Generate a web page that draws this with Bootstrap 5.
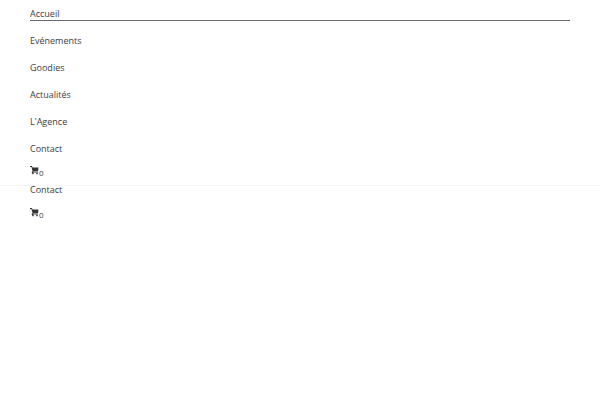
<!DOCTYPE html>
<html lang="fr">
<head>
<meta charset="utf-8">
<meta name="viewport" content="width=device-width, initial-scale=1">
<title>Accueil</title>
<link href="https://cdn.jsdelivr.net/npm/bootstrap@5.3.0/dist/css/bootstrap.min.css" rel="stylesheet">
<style>
body { font-family: "Open Sans", sans-serif; background: #fff; }
.site-menu { padding: 0 30px; }
.site-menu .nav-link { color: #3c3c3c; font-size: 9px; line-height: 13px; padding: 7px 0 6px; border-bottom: 1px solid transparent; }
.main-menu { border-bottom: 1px solid #f4f4f4; }
.main-menu .nav-link.active { padding-bottom: 0; margin-bottom: 6px; border-color: #6a6a72; }
.sub-menu { margin-top: -3px; }
.sub-menu .nav-link { padding-top: 0; }
.site-menu .cart-link { padding: 4px 0 7px; }
.sub-menu .cart-link { padding-top: 5px; }
.cart-link svg { width: 9px; height: 9px; margin-bottom: 2px; fill: #333; }
.cart-count { font-size: 8px; line-height: 8px; }
</style>
</head>
<body>
<header class="main-menu">
<nav class="site-menu" aria-label="Menu principal">
<ul class="nav flex-column">
<li class="nav-item"><a class="nav-link active" href="#" aria-current="page">Accueil</a></li>
<li class="nav-item"><a class="nav-link" href="#">Evénements</a></li>
<li class="nav-item"><a class="nav-link" href="#">Goodies</a></li>
<li class="nav-item"><a class="nav-link" href="#">Actualités</a></li>
<li class="nav-item"><a class="nav-link" href="#">L'Agence</a></li>
<li class="nav-item"><a class="nav-link" href="#">Contact</a></li>
<li class="nav-item"><a class="nav-link cart-link d-flex align-items-start" href="#" aria-label="Panier, 0 article"><svg viewBox="0 0 18 18" aria-hidden="true"><path d="M0 0h4l1 3h12l-1 8H7l-1 2h10v1H3l2-4L3 2H0z"/><circle cx="6" cy="15" r="1.7"/><circle cx="14" cy="15" r="1.7"/></svg><span class="cart-count align-self-end">0</span></a></li>
</ul>
</nav>
</header>
<nav class="site-menu sub-menu" aria-label="Menu secondaire">
<ul class="nav flex-column">
<li class="nav-item"><a class="nav-link" href="#">Contact</a></li>
<li class="nav-item"><a class="nav-link cart-link d-flex align-items-start" href="#" aria-label="Panier, 0 article"><svg viewBox="0 0 18 18" aria-hidden="true"><path d="M0 0h4l1 3h12l-1 8H7l-1 2h10v1H3l2-4L3 2H0z"/><circle cx="6" cy="15" r="1.7"/><circle cx="14" cy="15" r="1.7"/></svg><span class="cart-count align-self-end">0</span></a></li>
</ul>
</nav>
<script src="https://cdn.jsdelivr.net/npm/bootstrap@5.3.0/dist/js/bootstrap.bundle.min.js"></script>
</body>
</html>
